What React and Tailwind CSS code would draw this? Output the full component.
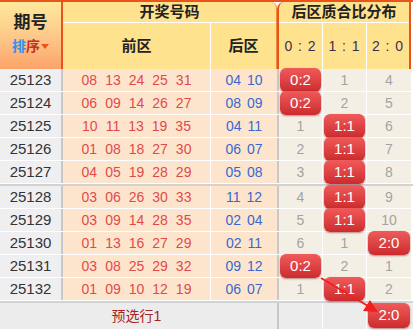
import React from 'react'

const rows = [
  { id: '25123', front: ['08', '13', '24', '25', '31'], back: ['04', '10'], dist: ['0:2', '1', '4'] },
  { id: '25124', front: ['06', '09', '14', '26', '27'], back: ['08', '09'], dist: ['0:2', '2', '5'] },
  { id: '25125', front: ['10', '11', '13', '19', '35'], back: ['04', '11'], dist: ['1', '1:1', '6'] },
  { id: '25126', front: ['01', '08', '18', '27', '30'], back: ['06', '07'], dist: ['2', '1:1', '7'] },
  { id: '25127', front: ['04', '05', '19', '28', '29'], back: ['05', '08'], dist: ['3', '1:1', '8'] },
  { id: '25128', front: ['03', '06', '26', '30', '33'], back: ['11', '12'], dist: ['4', '1:1', '9'] },
  { id: '25129', front: ['03', '09', '14', '28', '35'], back: ['02', '04'], dist: ['5', '1:1', '10'] },
  { id: '25130', front: ['01', '13', '16', '27', '29'], back: ['02', '11'], dist: ['6', '1', '2:0'] },
  { id: '25131', front: ['03', '08', '25', '29', '32'], back: ['09', '12'], dist: ['0:2', '2', '1'] },
  { id: '25132', front: ['01', '09', '10', '12', '19'], back: ['06', '07'], dist: ['1', '1:1', '2'] },
]

const font = { fontFamily: '"Liberation Sans", "Noto Sans CJK SC", sans-serif' }

function Badge({ text }) {
  return (
    <div className="absolute inset-x-[1px] -top-[1px] -bottom-[1px] rounded-[6px] bg-gradient-to-b from-[#f05a5a] to-[#cc2a2e] shadow-[0_1px_2px_rgba(120,0,0,0.45)] flex items-center justify-center text-white text-[15px] z-10">
      {text}
    </div>
  )
}

function DistCell({ value, w }) {
  const isBadge = value.includes(':')
  return (
    <div className={`relative ${w} h-full flex items-center justify-center text-[14px] text-[#a3a3a3]`}>
      {isBadge ? <Badge text={value} /> : value}
    </div>
  )
}

function Row({ r }) {
  return (
    <div className="flex h-[23px] border-b border-white">
      <div className="w-[61px] bg-[#efeff1] flex items-center justify-center text-[15px] text-[#333]">{r.id}</div>
      <div className="w-[2px] bg-[#c8c8c8]" />
      <div className="w-[147px] bg-[#fde5cd] flex items-center justify-center gap-[8px] text-[14px] text-[#e14a4a]">
        {r.front.map((n, i) => <span key={i}>{n}</span>)}
      </div>
      <div className="w-[1px] bg-white" />
      <div className="w-[66px] bg-[#fde5cd] flex items-center justify-center gap-[6px] text-[14px] text-[#3a68cf]">
        {r.back.map((n, i) => <span key={i}>{n}</span>)}
      </div>
      <div className="w-[2px] bg-[#c8c8c8]" />
      <div className="flex bg-[#f4efe4]">
        <DistCell value={r.dist[0]} w="w-[43px]" />
        <div className="w-[1px] bg-white" />
        <DistCell value={r.dist[1]} w="w-[43px]" />
        <div className="w-[1px] bg-white" />
        <DistCell value={r.dist[2]} w="w-[44px]" />
      </div>
    </div>
  )
}

export default function App() {
  return (
    <div className="relative w-[413px] h-[330px] bg-white overflow-hidden" style={font}>
      {/* header */}
      <div className="flex h-[69px] border-t-2 border-[#e9541c]">
        <div className="w-[61px] bg-gradient-to-b from-[#fee99b] via-[#fdc98a] to-[#fca36a] flex flex-col items-center pt-[9px]">
          <div className="text-[17px] font-bold text-[#222] leading-[24px]">期号</div>
          <div className="flex items-center text-[14px] font-bold leading-[20px] mt-[1px]">
            <span className="text-[#3a90e8]">排</span>
            <span className="text-[#c4302c]">序</span>
            <span className="ml-[1px] w-0 h-0 border-x-[4px] border-x-transparent border-t-[5px] border-t-[#e9541c]" />
          </div>
        </div>
        <div className="w-[2px] bg-[#e9541c]" />
        <div className="w-[214px] bg-[#fee28e] rounded-tr-[6px] border-r border-[#f08a3a] flex flex-col">
          <div className="h-[21px] flex items-center justify-center text-[15px] font-bold text-[#222] border-b border-white">开奖号码</div>
          <div className="flex-1 flex">
            <div className="w-[147px] flex items-center justify-center text-[15px] font-bold text-[#222]">前区</div>
            <div className="w-[1px] bg-white" />
            <div className="flex-1 flex items-center justify-center text-[15px] font-bold text-[#222]">后区</div>
          </div>
        </div>
        <div className="w-[134px] bg-[#fee28e] rounded-tl-[7px] border-l-2 border-r-2 border-[#e9541c] flex flex-col">
          <div className="h-[21px] flex items-center justify-center text-[15px] font-bold text-[#222] border-b border-white">后区质合比分布</div>
          <div className="flex-1 flex text-[14px] text-[#3d2f4f] tracking-[1px]">
            <div className="w-[43px] flex items-center justify-center">0 : 2</div>
            <div className="w-[1px] bg-white" />
            <div className="w-[43px] flex items-center justify-center">1 : 1</div>
            <div className="w-[1px] bg-white" />
            <div className="flex-1 flex items-center justify-center">2 : 0</div>
          </div>
        </div>
      </div>

      {rows.slice(0, 5).map((r) => <Row key={r.id} r={r} />)}
      <div className="h-[2px] bg-[#d2d2d2]" />
      {rows.slice(5).map((r) => <Row key={r.id} r={r} />)}
      <div className="h-[2px] bg-[#d2d2d2]" />

      {/* footer */}
      <div className="flex h-[26px] bg-[#ececec]">
        <div className="w-[63px]" />
        <div className="w-[147px] flex items-center justify-center text-[14px] text-[#a52424]">预选行1</div>
        <div className="w-[67px]" />
        <div className="w-[2px] bg-[#c8c8c8]" />
        <div className="flex">
          <div className="w-[43px]" />
          <div className="w-[1px] bg-white" />
          <div className="w-[43px]" />
          <div className="w-[1px] bg-white" />
          <div className="relative w-[44px] h-[23px] mt-[1px]">
            <Badge text="2:0" />
          </div>
        </div>
      </div>

      {/* arrow */}
      <svg className="absolute left-0 top-0 z-20 pointer-events-none" width="413" height="330">
        <line x1="321" y1="278" x2="368" y2="306" stroke="#f0201c" strokeWidth="2" />
        <polygon points="378,312 363,311 370,300" fill="#f0201c" />
      </svg>
    </div>
  )
}
